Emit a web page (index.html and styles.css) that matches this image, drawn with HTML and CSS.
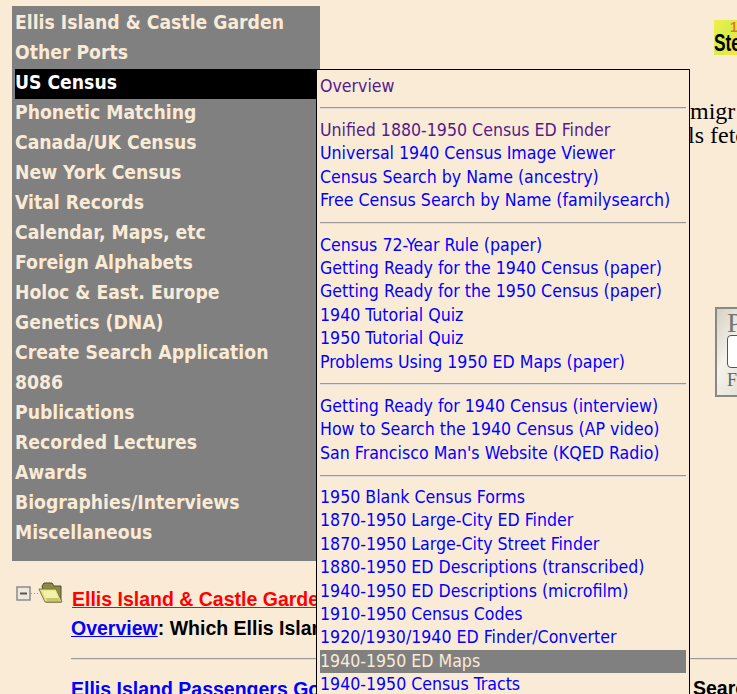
FILE: index.html
```html
<!DOCTYPE html>
<html lang="en">
<head>
<meta charset="utf-8">
<title>Stephen Morse One-Step Pages</title>
<link rel="stylesheet" href="styles.css">
</head>
<body>
<div class="top">
  <nav class="menu">
    <a class="item">Ellis Island &amp; Castle Garden</a>
    <a class="item">Other Ports</a>
    <div class="item-wrap">
      <a class="item current">US Census</a>
      <div class="submenu">
        <a class="sub visited">Overview</a>
        <hr class="rule">
        <a class="sub visited">Unified 1880-1950 Census ED Finder</a>
        <a class="sub">Universal 1940 Census Image Viewer</a>
        <a class="sub">Census Search by Name (ancestry)</a>
        <a class="sub">Free Census Search by Name (familysearch)</a>
        <hr class="rule">
        <a class="sub">Census 72-Year Rule (paper)</a>
        <a class="sub">Getting Ready for the 1940 Census (paper)</a>
        <a class="sub">Getting Ready for the 1950 Census (paper)</a>
        <a class="sub">1940 Tutorial Quiz</a>
        <a class="sub">1950 Tutorial Quiz</a>
        <a class="sub">Problems Using 1950 ED Maps (paper)</a>
        <hr class="rule">
        <a class="sub">Getting Ready for 1940 Census (interview)</a>
        <a class="sub">How to Search the 1940 Census (AP video)</a>
        <a class="sub">San Francisco Man's Website (KQED Radio)</a>
        <hr class="rule">
        <a class="sub">1950 Blank Census Forms</a>
        <a class="sub">1870-1950 Large-City ED Finder</a>
        <a class="sub">1870-1950 Large-City Street Finder</a>
        <a class="sub">1880-1950 ED Descriptions (transcribed)</a>
        <a class="sub">1940-1950 ED Descriptions (microfilm)</a>
        <a class="sub">1910-1950 Census Codes</a>
        <a class="sub">1920/1930/1940 ED Finder/Converter</a>
        <a class="sub hover">1940-1950 ED Maps</a>
        <a class="sub">1940-1950 Census Tracts</a>
      </div>
    </div>
    <a class="item">Phonetic Matching</a>
    <a class="item">Canada/UK Census</a>
    <a class="item">New York Census</a>
    <a class="item">Vital Records</a>
    <a class="item">Calendar, Maps, etc</a>
    <a class="item">Foreign Alphabets</a>
    <a class="item">Holoc &amp; East. Europe</a>
    <a class="item">Genetics (DNA)</a>
    <a class="item">Create Search Application</a>
    <a class="item">8086</a>
    <a class="item">Publications</a>
    <a class="item">Recorded Lectures</a>
    <a class="item">Awards</a>
    <a class="item">Biographies/Interviews</a>
    <a class="item">Miscellaneous</a>
  </nav>
  <div class="aside">
    <div class="logo"><span class="logo-num">1</span><span class="logo-txt">Ste</span></div>
    <p class="intro"><span class="intro-first">migr</span><br>ls fetc</p>
    <div class="searchbox">
      <span class="box-title">P</span>
      <span class="box-input"></span>
      <span class="box-foot">F</span>
    </div>
  </div>
</div>
<div class="tree">
  <div class="tree-head">
    <svg class="tree-icon" width="48" height="24" viewBox="0 0 48 24" aria-hidden="true">
      <rect x="1" y="6" width="13" height="13" fill="#efe8dc" stroke="#8c8c8c" stroke-width="1.500"/>
      <rect x="4" y="11.500" width="7" height="2" fill="#555"/>
      <path d="M15 12.500h7" stroke="#999" stroke-dasharray="1 2"/>
      <path d="M26 5l2-3h8l2 3h7v16H30z" fill="#8d8a45" stroke="#4f4f28"/>
      <path d="M23 8h17l6 13H29z" fill="#e8e58c" stroke="#77773a"/>
      <path d="M27 10h12l4 9H31z" fill="#f4f1a8"/>
      <path d="M30 17h13l1 3H31z" fill="#c9c66c"/>
    </svg>
    <a class="tree-title">Ellis Island &amp; Castle Garden</a>
  </div>
  <div class="tree-body">
    <p class="line"><a class="link">Overview</a>: Which Ellis Island</p>
    <hr class="tree-rule">
    <p class="line last"><a class="link plain">Ellis Island Passengers Gold Form</a></p>
  </div>
</div>
<div class="search-word">Search</div>
</body>
</html>
```
FILE: styles.css
```css
html, body {
  margin: 0;
  padding: 0;
  height: 694px;
  overflow: hidden;
  background: #faebd7;
}
body {
  position: relative;
  font-family: "Liberation Sans", Arial, sans-serif;
  color: #000;
}
.top {
  display: flex;
  padding: 6px 0 0 12px;
}
.menu {
  width: 308px;
  height: 555px;
  flex: none;
  background: #808080;
  padding: 3px 4px 0 3px;
  box-sizing: border-box;
  display: flex;
  flex-direction: column;
  font-family: "DejaVu Sans Condensed", "DejaVu Sans", sans-serif;
  font-stretch: condensed;
  font-weight: bold;
  font-size: 19.200px;
}
.item {
  display: block;
  height: 30px;
  line-height: 28px;
  color: #faebd7;
  white-space: nowrap;
}
.item-wrap {
  position: relative;
}
.current {
  background: #000;
  color: #fff;
}
.submenu {
  position: absolute;
  left: 301px;
  top: 0;
  width: 366px;
  height: 700px;
  padding: 4.600px 3px 0;
  border: 1px solid #000;
  background: #faebd7;
  z-index: 2;
  font-weight: normal;
  font-size: 17.600px;
}
.sub {
  display: block;
  height: 23.400px;
  line-height: 23.400px;
  color: #00f;
  white-space: nowrap;
}
.visited { color: #551a8b; }
.hover { background: #808080; color: #faebd7; }
.rule {
  margin: 9.500px 0;
  height: 0;
  border: 0;
  border-top: 1px solid #999;
  border-bottom: 1px solid #ddd;
}
.aside {
  flex: 1;
  min-width: 0;
  overflow: hidden;
}
.logo {
  margin: 14px 0 0 394px;
  height: 35px;
  background: linear-gradient(120deg, #f2ee4a, #d8ee4a 45%, #f4e640);
  overflow: hidden;
  font-family: "Liberation Sans", sans-serif;
  font-weight: bold;
  line-height: 1;
}
.logo-num { display: block; font-size: 14px; color: #d9822b; padding-left: 16px; height: 11px; }
.logo-txt {
  display: block;
  font-size: 24px;
  color: #000;
  white-space: nowrap;
  transform: scaleX(0.72);
  transform-origin: left center;
}
.intro {
  margin: 44px 0 0 368px;
  font-family: "Liberation Serif", serif;
  font-size: 24px;
  line-height: 24px;
  white-space: nowrap;
}
.intro-first { margin-left: 2px; }
.searchbox {
  margin: 160px 0 0 395px;
  width: 60px;
  height: 90px;
  box-sizing: border-box;
  border: 2px solid #888;
  background: linear-gradient(120deg, #d5d0c2, #f4f2ea 35%, #d8d4c6);
  padding: 2px 0 0 10px;
  font-family: "Liberation Serif", serif;
  color: #777;
  overflow: hidden;
}
.box-title { display: block; font-size: 28px; line-height: 24px; }
.box-input { display: block; height: 33px; background: #fff; border: 1px solid #555; border-radius: 4px; box-sizing: border-box; }
.box-foot { display: block; font-size: 18px; line-height: 24px; color: #665; }
.tree {
  padding: 20px 0 0 16px;
}
.tree-head {
  display: flex;
  align-items: flex-start;
}
.tree-icon { flex: none; }
.tree-title {
  margin: 7px 0 0 8px;
  font-size: 19.500px;
  line-height: 23px;
  font-weight: bold;
  color: #f00;
  text-decoration: underline;
  white-space: nowrap;
}
.tree-body {
  padding: 0 0 0 55px;
  font-size: 19.500px;
  font-weight: bold;
}
.line {
  margin: 6px 0 0;
  line-height: 23px;
  white-space: nowrap;
}
.link { color: #00f; text-decoration: underline; }
.tree-rule {
  margin: 18px 0 0;
  height: 0;
  border: 0;
  border-top: 1px solid #999;
  border-bottom: 1px solid #ddd;
}
.last { margin-top: 18px; }
.search-word {
  position: absolute;
  left: 693px;
  top: 677px;
  font-size: 19.500px;
  line-height: 23px;
  font-weight: bold;
  white-space: nowrap;
}
```
